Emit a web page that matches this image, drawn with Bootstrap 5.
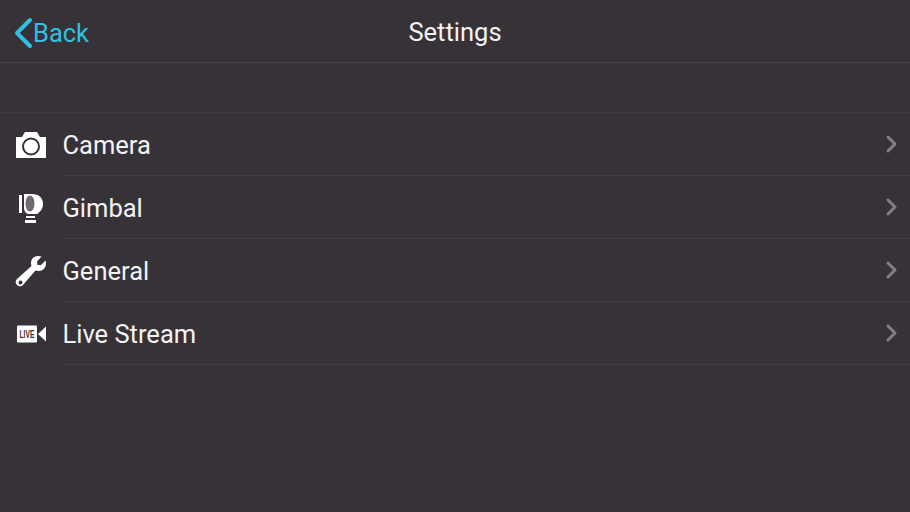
<!DOCTYPE html>
<html lang="en">
<head>
    <meta charset="UTF-8">
    <meta name="viewport" content="width=device-width, initial-scale=1.0">
    <title>Settings</title>
    <link href="https://cdn.jsdelivr.net/npm/bootstrap@5.3.0/dist/css/bootstrap.min.css" rel="stylesheet">
    <style>
        html, body {
            height: 100%;
        }
        body {
            background-color: #373238;
            color: #f2f2f2;
            font-family: Roboto, "Liberation Sans", sans-serif;
            overflow: hidden;
        }
        .top-bar {
            height: 63px;
            border-bottom: 1px solid #4a454b;
        }
        .back-link {
            color: #2fc0e2;
            font-size: 25.5px;
            text-decoration: none;
            left: 14px;
            top: 14px;
        }
        .back-link:hover {
            color: #2fc0e2;
        }
        .top-title {
            font-size: 25.5px;
            line-height: 1;
            padding-top: 4px;
        }
        .menu-list {
            margin-top: 49px;
            border-top: 1px solid #3f3a40;
        }
        .menu-row {
            height: 63px;
            color: #f2f2f2;
            text-decoration: none;
            font-size: 25.5px;
        }
        .menu-row:hover {
            color: #f2f2f2;
        }
        .menu-icon {
            width: 63px;
            padding-left: 15px;
        }
        .menu-body {
            border-bottom: 1px solid #423d43;
            padding-right: 11px;
        }
        .menu-label {
            margin-top: 2px;
            margin-left: -0.5px;
        }
    </style>
</head>
<body>

    <!-- Header -->
    <header class="top-bar position-relative d-flex align-items-center justify-content-center">
        <a href="#" class="back-link position-absolute d-flex align-items-center">
            <svg width="19" height="32" viewBox="0 0 19 32" fill="none" stroke="#2fc0e2" stroke-width="4" stroke-linecap="round" stroke-linejoin="round"><path d="M16 3 L3 16 L16 29"/></svg>
            <span>Back</span>
        </a>
        <div class="top-title">Settings</div>
    </header>

    <!-- Menu -->
    <div class="menu-list">
        <a href="#" class="menu-row d-flex">
            <div class="menu-icon d-flex align-items-center">
                <svg width="32" height="28" viewBox="0 0 32 28"><path fill="#fff" fill-rule="evenodd" d="M1 6H7L10 1H22L25 6H31V27H1ZM16 6.500A9 9 0 1 0 16 24.500A9 9 0 1 0 16 6.500ZM16 8.500A7 7 0 1 1 16 22.500A7 7 0 1 1 16 8.500Z"/></svg>
            </div>
            <div class="menu-body flex-grow-1 d-flex align-items-center justify-content-between">
                <span class="menu-label">Camera</span>
                <svg width="14" height="20" viewBox="0 0 14 20" fill="none" stroke="#827e83" stroke-width="3" stroke-linecap="round" stroke-linejoin="round"><path d="M3 3 L10 10 L3 17"/></svg>
            </div>
        </a>
        <a href="#" class="menu-row d-flex">
            <div class="menu-icon d-flex align-items-center">
                <svg width="32" height="34" viewBox="0 0 32 34"><path fill="#fff" d="M4 4H7V22H4ZM9 3H17C24 3 28 7 28 13C28 18 25 21 22 23H13C10 22 9 19 9 17Z"/><ellipse cx="15" cy="12.500" rx="4.500" ry="8" fill="#6f6b70"/><path fill="#fff" d="M11 25H20V27H11ZM10 29H21V32H10Z"/></svg>
            </div>
            <div class="menu-body flex-grow-1 d-flex align-items-center justify-content-between">
                <span class="menu-label">Gimbal</span>
                <svg width="14" height="20" viewBox="0 0 14 20" fill="none" stroke="#827e83" stroke-width="3" stroke-linecap="round" stroke-linejoin="round"><path d="M3 3 L10 10 L3 17"/></svg>
            </div>
        </a>
        <a href="#" class="menu-row d-flex">
            <div class="menu-icon d-flex align-items-center">
                <svg width="32" height="32" viewBox="0 0 32 32"><path fill="#fff" fill-rule="evenodd" d="M23 1C19 1 16 4 16 8C16 9 16.200 10 16.500 11L2 24C0 26 0.500 28.500 2 30C3.500 31.500 6 32 8 30L20.500 15.500C21.500 15.800 22.500 16 23.500 16C28 16 31 12.500 31 8.500C31 7.500 30.800 6.500 30.500 5.500L26 10H22.500L22 6.500L26.500 1.500C25.500 1.200 24.500 1 23 1ZM5.500 25.500A2 2 0 1 1 5.500 29.500A2 2 0 1 1 5.500 25.500Z"/></svg>
            </div>
            <div class="menu-body flex-grow-1 d-flex align-items-center justify-content-between">
                <span class="menu-label">General</span>
                <svg width="14" height="20" viewBox="0 0 14 20" fill="none" stroke="#827e83" stroke-width="3" stroke-linecap="round" stroke-linejoin="round"><path d="M3 3 L10 10 L3 17"/></svg>
            </div>
        </a>
        <a href="#" class="menu-row d-flex">
            <div class="menu-icon d-flex align-items-center">
                <svg width="32" height="18" viewBox="0 0 32 18"><rect x="2" y="0.500" width="20" height="17" rx="1" fill="#fff"/><text x="12" y="13" text-anchor="middle" font-family="Liberation Sans" font-size="10" font-weight="700" textLength="15" lengthAdjust="spacingAndGlyphs" fill="#373238">LIVE</text><path fill="#fff" d="M23 9L31 1.500V16.500L23 9Z"/></svg>
            </div>
            <div class="menu-body flex-grow-1 d-flex align-items-center justify-content-between">
                <span class="menu-label">Live Stream</span>
                <svg width="14" height="20" viewBox="0 0 14 20" fill="none" stroke="#827e83" stroke-width="3" stroke-linecap="round" stroke-linejoin="round"><path d="M3 3 L10 10 L3 17"/></svg>
            </div>
        </a>
    </div>

    <script src="https://cdn.jsdelivr.net/npm/bootstrap@5.3.0/dist/js/bootstrap.bundle.min.js"></script>
</body>
</html>
